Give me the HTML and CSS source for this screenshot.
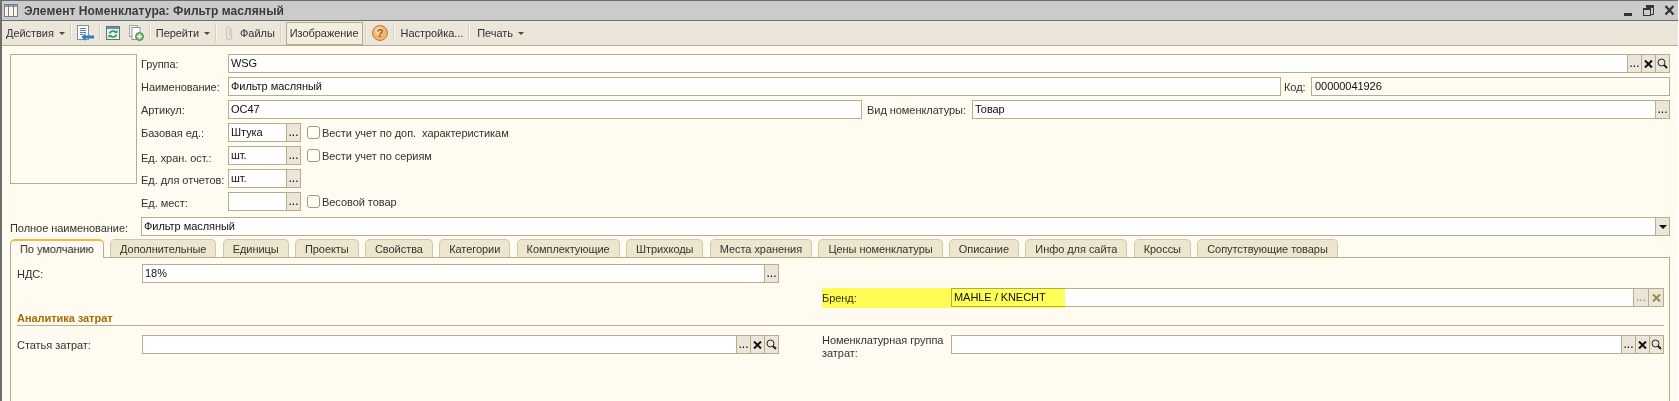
FILE: index.html
```html
<!DOCTYPE html>
<html>
<head>
	<title>Элемент Номенклатура: Фильтр масляный</title>
	<meta charset="utf-8">
	<link rel="stylesheet" href="styles.css">
</head>
<body>
<div class="window">
	<div class="titlebar">
		<svg class="title-icon" width="14" height="13" viewBox="0 0 14 13">
			<rect x="0.5" y="0.5" width="13" height="12" fill="#fdf6dc" stroke="#6f7f96"/>
			<rect x="1" y="1" width="12" height="2" fill="#8d9db5"/>
			<path d="M4.5 1v11M9.5 1v11" stroke="#6f7f96"/>
		</svg>
		<span class="title-text">Элемент Номенклатура: Фильтр масляный</span>
		<div class="win-buttons">
			<svg width="54" height="14" viewBox="0 0 54 14">
				<rect x="0" y="9" width="8" height="3" fill="#333"/>
				<path d="M22.5 3.5h7v7h-3M22.5 3.5v-2h7" fill="none" stroke="#333"/>
				<rect x="19.5" y="4.5" width="7" height="7" fill="none" stroke="#333"/>
				<rect x="19.5" y="4" width="7" height="2" fill="#333"/>
				<rect x="22" y="1" width="8" height="2" fill="#333"/>
				<path d="M41.5 2l8 8.5M49.5 2l-8 8.5" stroke="#333" stroke-width="2.2"/>
			</svg>
		</div>
	</div>

	<div class="toolbar">
		<div class="tool tool-first">Действия<span class="arrow"></span></div>
		<div class="sep"></div>
		<div class="tool tool-icons">
			<svg width="17" height="16" viewBox="0 0 17 16">
				<rect x="0.5" y="0.5" width="11" height="14" fill="#fff" stroke="#7d8fb0"/>
				<path d="M3 3.5h6M3 5.5h6M3 7.5h6M3 9.5h3" stroke="#5f7fb5"/>
				<path d="M17 10.5H8.5V8L4.5 12l4 4v-2.5H17z" fill="#2f7fc8"/>
			</svg>
		</div>
		<div class="sep"></div>
		<div class="tool tool-pair">
			<svg width="14" height="14" viewBox="0 0 14 14">
				<rect x="0.5" y="0.5" width="13" height="13" fill="#e8f0f2" stroke="#5d7488"/>
				<rect x="1" y="1" width="12" height="2" fill="#6d8ca6"/>
				<path d="M3.5 7.5a3.5 3 0 0 1 6-1.5M10.5 8.5a3.5 3 0 0 1-6 1.5" fill="none" stroke="#2e9a3e" stroke-width="1.6"/>
				<path d="M8 7h3.5V4zM6 9H2.5v3z" fill="#2e9a3e"/>
			</svg>
			<svg width="15" height="16" viewBox="0 0 15 16">
				<rect x="0.5" y="0.5" width="8" height="11" fill="#f3f3f3" stroke="#9aa5b0"/>
				<rect x="3" y="2.5" width="8" height="12" fill="#fff" stroke="#8b98a5"/>
				<circle cx="10.5" cy="11.5" r="4" fill="#6fb56a" stroke="#4f9350"/>
				<path d="M10.5 9v5M8 11.5h5" stroke="#fff" stroke-width="1.5"/>
			</svg>
		</div>
		<div class="sep"></div>
		<div class="tool">Перейти<span class="arrow"></span></div>
		<div class="sep"></div>
		<div class="tool tool-files">
			<svg width="8" height="16" viewBox="0 0 8 16">
				<path d="M6.5 4v8a2.5 2.5 0 0 1-5 0V3a2 2 0 0 1 3.5 0v8" fill="none" stroke="#cfcabd" stroke-width="1.2"/>
			</svg>
			<span>Файлы</span>
		</div>
		<div class="sep"></div>
		<div class="tool tool-active">Изображение</div>
		<div class="sep"></div>
		<div class="tool tool-icons">
			<svg width="16" height="16" viewBox="0 0 16 16">
				<circle cx="8" cy="8" r="7.5" fill="#f2b36a" stroke="#b9803a"/>
				<circle cx="7" cy="6" r="4" fill="#f8d3a3"/>
				<text x="8" y="12" text-anchor="middle" class="help-mark">?</text>
			</svg>
		</div>
		<div class="sep"></div>
		<div class="tool tool-setup">Настройка...</div>
		<div class="sep"></div>
		<div class="tool tool-print">Печать<span class="arrow"></span></div>
	</div>

	<div class="form">
		<div class="head">
			<div class="photo"></div>
			<div class="fields">
				<div class="row">
					<label class="lbl">Группа:</label>
					<div class="input grow"><span class="val">WSG</span>
						<span class="btn">...</span>
						<span class="btn"><svg width="9" height="8" viewBox="0 0 9 8"><path d="M1 0.5l7 7M8 0.5l-7 7" stroke="#111" stroke-width="2"/></svg></span>
						<span class="btn"><svg width="11" height="11" viewBox="0 0 11 11"><circle cx="4.5" cy="4.5" r="3.5" fill="none" stroke="#222"/><path d="M7 7l3 3" stroke="#222" stroke-width="2"/></svg></span>
					</div>
				</div>
				<div class="row">
					<label class="lbl">Наименование:</label>
					<div class="input grow"><span class="val">Фильтр масляный</span></div>
					<label class="lbl lbl-code">Код:</label>
					<div class="input input-code"><span class="val code">00000041926</span></div>
				</div>
				<div class="row">
					<label class="lbl">Артикул:</label>
					<div class="input input-article"><span class="val">OC47</span></div>
					<label class="lbl lbl-kind">Вид номенклатуры:</label>
					<div class="input grow"><span class="val">Товар</span><span class="btn">...</span></div>
				</div>
				<div class="row">
					<label class="lbl">Базовая ед.:</label>
					<div class="input input-short"><span class="val">Штука</span><span class="btn">...</span></div>
					<span class="check"></span>
					<span class="check-text">Вести учет по доп.&nbsp; характеристикам</span>
				</div>
				<div class="row">
					<label class="lbl lbl-low">Ед. хран. ост.:</label>
					<div class="input input-short"><span class="val">шт.</span><span class="btn">...</span></div>
					<span class="check"></span>
					<span class="check-text">Вести учет по сериям</span>
				</div>
				<div class="row">
					<label class="lbl lbl-drop">Ед. для отчетов:</label>
					<div class="input input-short"><span class="val">шт.</span><span class="btn">...</span></div>
				</div>
				<div class="row">
					<label class="lbl lbl-drop">Ед. мест:</label>
					<div class="input input-short"><span class="val"></span><span class="btn">...</span></div>
					<span class="check"></span>
					<span class="check-text">Весовой товар</span>
				</div>
			</div>
		</div>

		<div class="row row-full">
			<label class="lbl lbl-full lbl-drop">Полное наименование:</label>
			<div class="input grow"><span class="val">Фильтр масляный</span>
				<span class="btn"><span class="arrow-black"></span></span>
			</div>
		</div>

		<div class="tabs">
			<div class="tab tab-active">По умолчанию</div>
			<div class="tab">Дополнительные</div>
			<div class="tab">Единицы</div>
			<div class="tab">Проекты</div>
			<div class="tab">Свойства</div>
			<div class="tab">Категории</div>
			<div class="tab">Комплектующие</div>
			<div class="tab">Штрихкоды</div>
			<div class="tab">Места хранения</div>
			<div class="tab">Цены номенклатуры</div>
			<div class="tab">Описание</div>
			<div class="tab">Инфо для сайта</div>
			<div class="tab">Кроссы</div>
			<div class="tab">Сопутствующие товары</div>
		</div>

		<div class="panel">
			<div class="row col-left">
				<label class="lbl lbl-panel">НДС:</label>
				<div class="input grow"><span class="val">18%</span><span class="btn">...</span></div>
			</div>
			<div class="row col-right brand">
				<label class="lbl lbl-panel-r">Бренд:</label>
				<div class="input grow"><span class="val">MAHLE / KNECHT</span>
					<span class="btn btn-off">...</span>
					<span class="btn btn-off"><svg width="9" height="8" viewBox="0 0 9 8"><path d="M1 0.5l7 7M8 0.5l-7 7" stroke="#a08a4a" stroke-width="2"/></svg></span>
				</div>
				<div class="marker"></div>
			</div>
			<div class="section">Аналитика затрат</div>
			<div class="row col-left">
				<label class="lbl lbl-panel">Статья затрат:</label>
				<div class="input grow"><span class="val"></span>
					<span class="btn">...</span>
					<span class="btn"><svg width="9" height="8" viewBox="0 0 9 8"><path d="M1 0.5l7 7M8 0.5l-7 7" stroke="#111" stroke-width="2"/></svg></span>
					<span class="btn"><svg width="11" height="11" viewBox="0 0 11 11"><circle cx="4.5" cy="4.5" r="3.5" fill="none" stroke="#222"/><path d="M7 7l3 3" stroke="#222" stroke-width="2"/></svg></span>
				</div>
			</div>
			<div class="row col-right">
				<label class="lbl lbl-panel-r lbl-two">Номенклатурная группа затрат:</label>
				<div class="input grow"><span class="val"></span>
					<span class="btn">...</span>
					<span class="btn"><svg width="9" height="8" viewBox="0 0 9 8"><path d="M1 0.5l7 7M8 0.5l-7 7" stroke="#111" stroke-width="2"/></svg></span>
					<span class="btn"><svg width="11" height="11" viewBox="0 0 11 11"><circle cx="4.5" cy="4.5" r="3.5" fill="none" stroke="#222"/><path d="M7 7l3 3" stroke="#222" stroke-width="2"/></svg></span>
				</div>
			</div>
		</div>
	</div>
</div>
</body>
</html>
```

FILE: styles.css
```css
html, body {
    margin: 0;
    padding: 0;
    background-color: #fff;
}

body {
    font-family: "Liberation Sans", Arial, sans-serif;
    font-size: 11px;
    letter-spacing: -0.05px;
    color: #333;
}

.window {
    width: 1676px;
    height: 400px;
    overflow: hidden;
    border-top: 1px solid #6d6d6d;
    border-left: 2px solid #6d6d6d;
    background-color: #fffbf0;
}

/* title */
.titlebar {
    display: flex;
    align-items: center;
    height: 19px;
    padding-left: 2px;
    background-color: #cbcbcb;
    border-bottom: 1px solid #6d6d6d;
}

.title-text {
    margin-left: 6px;
    font-size: 12px;
    font-weight: bold;
    letter-spacing: 0.08px;
    color: #3a3a3a;
}

.win-buttons {
    display: flex;
    margin-left: auto;
}

/* toolbar */
.toolbar {
    display: flex;
    align-items: center;
    height: 24px;
    background-color: #ebe5da;
    border-bottom: 1px solid #b5ae8a;
}

.tool {
    display: flex;
    align-items: center;
    padding: 0 5px;
}

.tool-first {
    padding-left: 4px;
}

.tool-pair {
    gap: 9px;
}

.tool-files {
    gap: 7px;
    padding-left: 8px;
}

.tool-active {
    height: 21px;
    margin: 0 2px 0 4px;
    padding: 0 3px;
    border: 1px solid #b5ae8a;
    background-color: #f3eee0;
}

.tool-setup {
    padding-left: 6px;
}

.tool-print {
    padding-left: 7px;
}

.arrow {
    width: 0;
    height: 0;
    margin-left: 5px;
    border-left: 3px solid transparent;
    border-right: 3px solid transparent;
    border-top: 3px solid #5a4a20;
}

.sep {
    width: 1px;
    height: 18px;
    background-color: #d6d0bf;
    border-right: 1px solid #f7f4ec;
}

.help-mark {
    font-family: "Liberation Sans", Arial, sans-serif;
    font-size: 11px;
    font-weight: bold;
    fill: #8a5a1e;
}

/* form */
.form {
    padding: 8px 8px 0 8px;
}

.head {
    display: flex;
    gap: 4px;
    align-items: flex-start;
}

.photo {
    flex: none;
    width: 125px;
    height: 128px;
    border: 1px solid #b5ae8a;
}

.fields {
    flex: 1;
    display: flex;
    flex-direction: column;
    gap: 4px;
}

.row {
    display: flex;
    align-items: center;
    height: 19px;
}

.row-full {
    margin-top: 6px;
}

.lbl {
    flex: none;
    width: 87px;
    white-space: nowrap;
}

.lbl-low {
    padding-top: 4px;
}

.lbl-drop {
    padding-top: 2px;
}

.lbl-code {
    width: 27px;
    padding-left: 3px;
}

.lbl-kind {
    width: 105px;
    padding-left: 5px;
}

.lbl-full {
    width: 131px;
}

.lbl-panel {
    width: 125px;
}

.lbl-panel-r {
    width: 129px;
}

.lbl-two {
    white-space: normal;
    line-height: 13px;
    padding-top: 4px;
}

/* fields */
.input {
    box-sizing: border-box;
    display: flex;
    align-items: stretch;
    height: 19px;
    border: 1px solid #b5ae8a;
    background-color: #fff;
    color: #111;
}

.grow {
    flex: 1;
}

.val {
    flex: 1;
    padding-left: 2px;
    line-height: 17px;
    white-space: nowrap;
    overflow: hidden;
}

.input-code {
    flex: none;
    width: 359px;
}

.input-code .val {
    margin: 2px;
    padding-left: 1px;
    line-height: 13px;
    background-color: #fffbf0;
}

.input-article {
    flex: none;
    width: 634px;
}

.input-short {
    flex: none;
    width: 73px;
}

.btn {
    flex: none;
    display: flex;
    align-items: center;
    justify-content: center;
    width: 13px;
    border-left: 1px solid #b5ae8a;
    background-color: #ebe5da;
    color: #000;
    font-size: 12px;
    line-height: 19px;
}

.btn-off {
    color: #a08a4a;
    width: 14px;
}

.arrow-black {
    width: 0;
    height: 0;
    border-left: 4px solid transparent;
    border-right: 4px solid transparent;
    border-top: 4px solid #111;
}

.check {
    flex: none;
    box-sizing: border-box;
    width: 13px;
    height: 13px;
    margin-left: 6px;
    border: 1px solid #a09a80;
    border-radius: 3px;
    background-color: #fffdf6;
}

.check-text {
    margin-left: 2px;
    white-space: nowrap;
}

/* tabs */
.tabs {
    display: flex;
    gap: 6.25px;
    height: 18px;
    margin-top: 3px;
}

.tab {
    box-sizing: border-box;
    height: 18px;
    padding: 0 9px;
    line-height: 18px;
    white-space: nowrap;
    background-color: #ede6cf;
    border: 1px solid #cfc8a8;
    border-bottom: none;
    border-radius: 5px 5px 0 0;
}

.tab-active {
    position: relative;
    z-index: 1;
    height: 19px;
    background-color: #fffbf0;
    border-color: #b5ae8a;
    border-top: 2px solid #f0b94a;
    line-height: 17px;
}

.panel {
    display: grid;
    grid-template-columns: 762px 1fr;
    column-gap: 43px;
    row-gap: 5px;
    grid-auto-rows: min-content;
    height: 200px;
    padding: 6px 5px 0 6px;
    border: 1px solid #b5ae8a;
    background-color: #fffbf0;
}

.col-left {
    grid-column: 1;
}

.col-right {
    grid-column: 2;
}

.brand {
    grid-row: 2;
    position: relative;
}

.marker {
    position: absolute;
    left: 0;
    top: 0;
    width: 243px;
    height: 20px;
    background-color: #ffff5a;
    mix-blend-mode: multiply;
}

.section {
    grid-column: 1 / -1;
    box-sizing: border-box;
    height: 14px;
    margin-bottom: 4px;
    font-weight: bold;
    color: #a96b00;
    line-height: 12px;
    border-bottom: 1px solid #b5ae8a;
}
```
